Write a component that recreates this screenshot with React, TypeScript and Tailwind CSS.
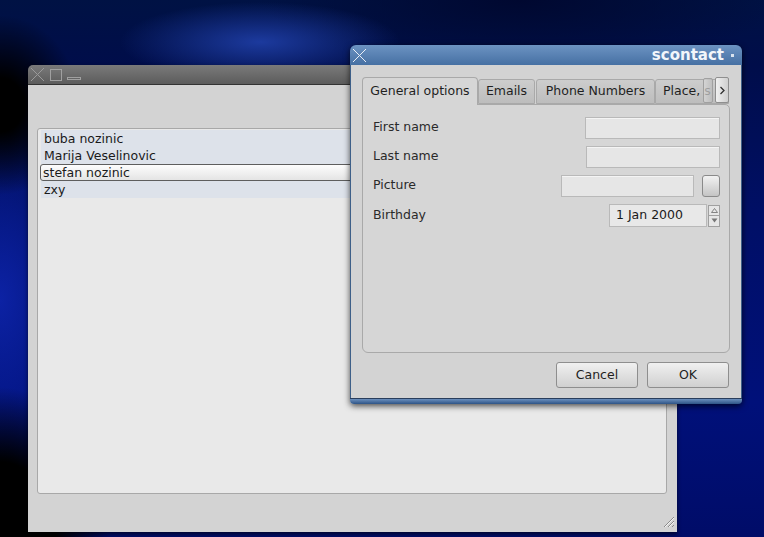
import React from 'react';

const font = "font-['DejaVu_Sans',_'Liberation_Sans',_sans-serif]";

const contacts = ['buba nozinic', 'Marija Veselinovic', 'stefan nozinic', 'zxy'];

function CloseGlyph({ className }: { className?: string }) {
  return (
    <svg width="15" height="15" viewBox="0 0 15 15" className={className}>
      <path d="M1 1 L14 14 M14 1 L1 14" stroke="currentColor" strokeWidth="1" fill="none" />
    </svg>
  );
}

function Field({ label, children }: { label: string; children: React.ReactNode }) {
  return (
    <div className="flex items-center justify-between h-[29px]">
      <span className="text-[12.5px] text-[#2a2a2a]">{label}</span>
      <div className="flex items-center gap-2">{children}</div>
    </div>
  );
}

function Input({ w }: { w: string }) {
  return <div className={`${w} h-[22px] bg-[#e6e6e6] border border-[#b9b9b9] shadow-[inset_0_1px_0_#f4f4f4]`} />;
}

export default function App() {
  return (
    <div className={`relative w-[764px] h-[537px] overflow-hidden ${font} bg-[radial-gradient(ellipse_140px_40px_at_260px_42px,#1c3a9e_0%,transparent_100%),radial-gradient(ellipse_80px_90px_at_0px_105px,#000000_30%,transparent_100%),radial-gradient(ellipse_110px_150px_at_0px_537px,#000000_50%,transparent_100%),radial-gradient(ellipse_90px_170px_at_0px_300px,#0c22a4_0%,transparent_100%),radial-gradient(ellipse_260px_70px_at_520px_0px,#000830_0%,transparent_100%),linear-gradient(180deg,#001244_0%,#000d4a_12%,#000f66_40%,#00107a_75%,#000c68_100%)]`}>
      {/* main window */}
      <div className="absolute left-[28px] top-[65px] w-[649px] h-[467px] flex flex-col rounded-tl-[5px] overflow-hidden shadow-[0_2px_4px_rgba(0,0,0,0.6)]">
        <div className="h-[20px] shrink-0 flex items-center gap-[5px] px-[2px] bg-[linear-gradient(180deg,#7a7a7a,#5c5c5c)] border-b border-[#333] text-[#9a9a9a]">
          <CloseGlyph />
          <div className="w-[12px] h-[12px] border border-[#a0a0a0]" />
          <div className="w-[14px] h-[3px] border border-[#a0a0a0] mt-[8px]" />
        </div>
        <div className="flex-1 bg-[#d3d3d3] pt-[43px] pl-[9px] pr-[10px] pb-[38px] flex flex-col relative">
          <div className="w-[630px] h-[366px] bg-[#e9e9e9] border border-[#a8a8a8] rounded-[3px] pt-[1px] px-[3px]">
            {contacts.map((c, i) => (
              <div
                key={c}
                className={
                  i === 2
                    ? 'h-[17px] leading-[16px] text-[12.5px] pl-[2px] text-[#1a1a1a] bg-[linear-gradient(180deg,#fdfdfd,#e4e4e4)] border border-[#5e5e5e] rounded-[3px] -mx-[1px]'
                    : 'h-[17px] leading-[17px] text-[12.5px] pl-[3px] text-[#1a1a1a] bg-[#dde2ea]'
                }
              >
                {c}
              </div>
            ))}
          </div>
          <svg width="14" height="14" viewBox="0 0 14 14" className="absolute right-[2px] bottom-[4px]">
            <path d="M13 3 L3 13 M13 7 L7 13 M13 11 L11 13" stroke="#8a8a8a" strokeWidth="1" />
            <path d="M13 4 L4 13 M13 8 L8 13" stroke="#f5f5f5" strokeWidth="1" />
          </svg>
        </div>
        <div className="h-[2px] bg-[#3a3a3a] shrink-0" />
      </div>

      {/* dialog */}
      <div className="absolute left-[350px] top-[45px] w-[392px] h-[359px] flex flex-col rounded-t-[6px] rounded-b-[4px] overflow-hidden shadow-[0_2px_6px_rgba(0,0,0,0.7)]">
        <div className="h-[20px] shrink-0 flex items-center justify-between pl-[2px] pr-[8px] bg-[linear-gradient(180deg,#6c93c2,#4670a3)] text-[#e8eef6]">
          <CloseGlyph />
          <div className="flex items-center gap-[7px]">
            <span className="text-[15px] font-bold text-[#f2f6fb] leading-none">scontact</span>
            <div className="w-[3px] h-[3px] bg-[#d8e2ee]" />
          </div>
        </div>
        <div className="flex-1 bg-[#d3d3d3] border-x border-[#3e5f88] px-[11px] pt-[12px] pb-[10px] flex flex-col">
          {/* tabs */}
          <div className="flex items-end h-[27px] relative">
            <div className="h-[28px] w-[116px] -mb-[1px] z-10 bg-[#d6d6d6] border border-b-0 border-[#a9a9a9] rounded-t-[4px] flex items-center justify-center text-[12.5px] text-[#1f1f1f]">
              General options
            </div>
            <div className="h-[25px] w-[57px] bg-[linear-gradient(180deg,#cdcdcd,#bdbdbd)] border border-[#a9a9a9] rounded-t-[3px] flex items-center justify-center text-[12.5px] text-[#1f1f1f]">
              Emails
            </div>
            <div className="h-[25px] w-[119px] ml-[1px] bg-[linear-gradient(180deg,#cdcdcd,#bdbdbd)] border border-[#a9a9a9] rounded-t-[3px] flex items-center justify-center text-[12.5px] text-[#1f1f1f]">
              Phone Numbers
            </div>
            <div className="h-[25px] w-[74px] bg-[linear-gradient(180deg,#cdcdcd,#bdbdbd)] border border-[#a9a9a9] rounded-t-[3px] flex items-center pl-[7px] text-[12.5px] text-[#1f1f1f] whitespace-nowrap">
              Place, s
            </div>
            <div className="absolute right-[17px] top-[1px] w-[10px] h-[25px] z-20 bg-[linear-gradient(90deg,rgba(216,216,216,0.7),rgba(188,188,188,0.8))] border border-[#a0a0a0] rounded-[2px]" />
            <div className="absolute right-[1px] top-[0px] w-[14px] h-[26px] z-20 bg-[linear-gradient(90deg,#f0f0f0,#cfcfcf)] border border-[#8f8f8f] rounded-[2px] flex items-center justify-center">
              <svg width="7" height="9" viewBox="0 0 7 9"><path d="M1.5 1 L5 4.5 L1.5 8" stroke="#303030" strokeWidth="1.3" fill="none" /></svg>
            </div>
          </div>
          <div className="h-[249px] bg-[#d6d6d6] border border-[#a9a9a9] rounded-b-[6px] rounded-tr-[5px] pl-[10px] pr-[9px] pt-[8px] flex flex-col">
            <Field label="First name">
              <Input w="w-[135px]" />
            </Field>
            <Field label="Last name">
              <Input w="w-[134px]" />
            </Field>
            <Field label="Picture">
              <Input w="w-[133px]" />
              <div className="w-[18px] h-[22px] rounded-[3px] border border-[#8a8a8a] bg-[linear-gradient(180deg,#f2f2f2,#c4c4c4)]" />
            </Field>
            <div className="mt-[1px]">
              <Field label="Birthday">
                <div className="flex items-center">
                  <div className="w-[98px] h-[23px] bg-[#e8e8e8] border border-[#b9b9b9] text-[12.5px] text-[#1a1a1a] pl-[6px] flex items-center">
                    1 Jan 2000
                  </div>
                  <div className="flex flex-col ml-[1px]">
                    <div className="w-[12px] h-[11px] border border-[#a0a0a0] bg-[#e6e6e6] flex items-center justify-center">
                      <svg width="7" height="5" viewBox="0 0 7 5"><path d="M3.5 0.5 L6.5 4.5 L0.5 4.5 Z" fill="none" stroke="#777" strokeWidth="0.9" /></svg>
                    </div>
                    <div className="w-[12px] h-[11px] border border-t-0 border-[#a0a0a0] bg-[#e6e6e6] flex items-center justify-center">
                      <svg width="7" height="5" viewBox="0 0 7 5"><path d="M0.5 0.5 L6.5 0.5 L3.5 4.5 Z" fill="#777" /></svg>
                    </div>
                  </div>
                </div>
              </Field>
            </div>
          </div>
          <div className="flex justify-end gap-[9px] mt-[9px] pr-[1px]">
            <div className="w-[82px] h-[26px] rounded-[3px] border border-[#8e8e8e] bg-[linear-gradient(180deg,#f0f0f0,#d0d0d0)] flex items-center justify-center text-[12.5px] text-[#1f1f1f]">
              Cancel
            </div>
            <div className="w-[82px] h-[26px] rounded-[3px] border border-[#8e8e8e] bg-[linear-gradient(180deg,#f0f0f0,#d0d0d0)] flex items-center justify-center text-[12.5px] text-[#1f1f1f]">
              OK
            </div>
          </div>
        </div>
        <div className="h-[6px] shrink-0 bg-[linear-gradient(180deg,#6b8fbd,#2e5486)] border-t border-[#2a3e5c]" />
      </div>
    </div>
  );
}
